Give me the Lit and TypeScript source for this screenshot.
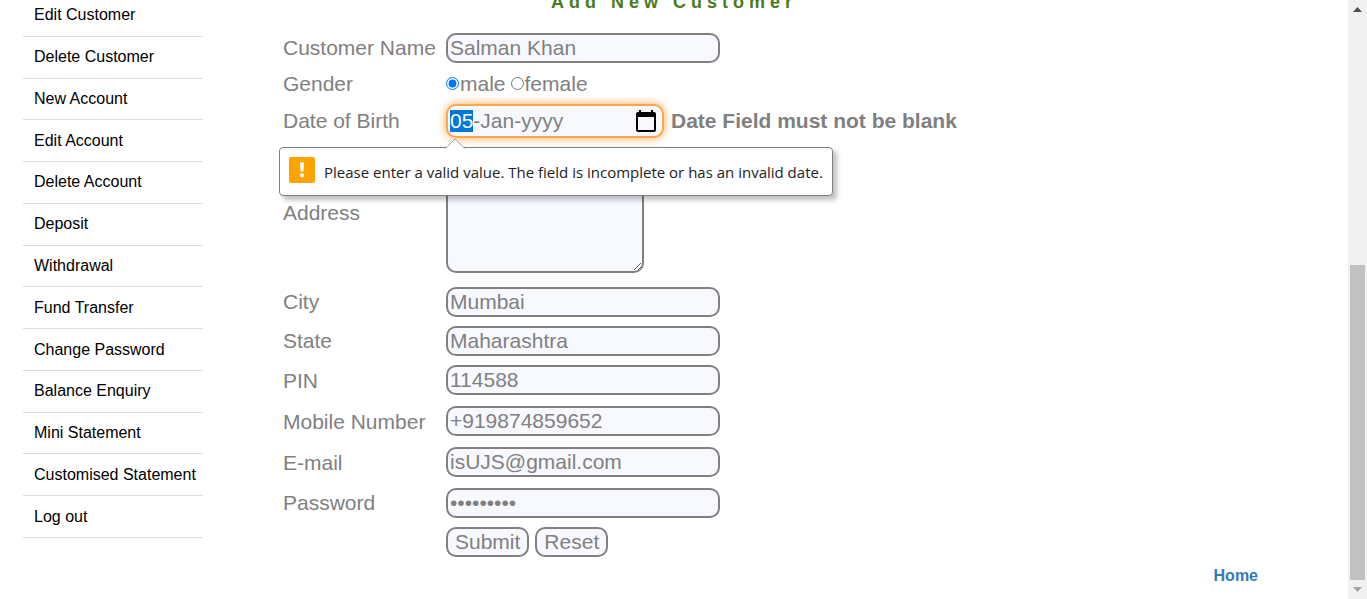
import { LitElement, html, css, svg } from "lit";
import { customElement, query } from "lit/decorators.js";
import { classMap } from "lit/directives/class-map.js";

const LINKS = [
  "Edit Customer",
  "Delete Customer",
  "New Account",
  "Edit Account",
  "Delete Account",
  "Deposit",
  "Withdrawal",
  "Fund Transfer",
  "Change Password",
  "Balance Enquiry",
  "Mini Statement",
  "Customised Statement",
  "Log out",
];

interface Field {
  id: string;
  label: string;
  value: string;
  type: string;
  tall?: boolean;
}

const CONTACT_FIELDS: Field[] = [
  { id: "city", label: "City", value: "Mumbai", type: "text" },
  { id: "state", label: "State", value: "Maharashtra", type: "text" },
  { id: "pin", label: "PIN", value: "114588", type: "text", tall: true },
  { id: "mobile", label: "Mobile Number", value: "+919874859652", type: "text", tall: true },
  { id: "email", label: "E-mail", value: "isUJS@gmail.com", type: "text", tall: true },
  { id: "password", label: "Password", value: "secret123", type: "password" },
];

const calendarIcon = svg`
  <svg class="icon" viewBox="0 0 20 22" aria-hidden="true">
    <path fill="#000" fill-rule="evenodd"
      d="M3 0h2v2h10V0h2v2h1a2 2 0 0 1 2 2v16a2 2 0 0 1-2 2H2a2 2 0 0 1-2-2V4a2 2 0 0 1 2-2h1zM2 7v13h16V7z"/>
  </svg>`;

@customElement("side-menu")
export class SideMenu extends LitElement {
  static styles = css`
    :host {
      display: block;
    }
    .list {
      display: grid;
      grid-auto-rows: 1fr;
      min-height: 543px;
      margin: 0;
      padding: 0;
      list-style: none;
    }
    .item {
      display: flex;
      align-items: center;
      border-bottom: 1px solid #ddd;
    }
    .link {
      flex: 1;
      padding-left: 11px;
      color: #000;
      font-size: 16px;
      line-height: 20px;
      text-decoration: none;
      white-space: nowrap;
    }
  `;

  render() {
    return html`<nav aria-label="Manager">
      <ul class="list">
        ${LINKS.map((t) => html`<li class="item"><a class="link" href="#">${t}</a></li>`)}
      </ul>
    </nav>`;
  }
}

@customElement("customer-form")
export class CustomerForm extends LitElement {
  static styles = css`
    :host {
      display: block;
      color: #808080;
      font-size: 21px;
      line-height: 22px;
    }
    .form {
      display: flex;
      flex-direction: column;
      gap: 9px;
      max-width: 782px;
    }
    .title {
      margin: 0 0 11px;
      color: #4b7a1e;
      font-size: 18px;
      line-height: 22px;
      letter-spacing: 5px;
      text-align: center;
    }
    .row {
      position: relative;
      display: grid;
      grid-template-columns: 163px 1fr;
      align-items: center;
    }
    .tall {
      min-height: 32px;
    }
    .tall .text {
      align-self: start;
    }
    .text,
    .area,
    .btn,
    .date {
      box-sizing: border-box;
      border: 2px solid #808080;
      border-radius: 10px;
      background: #f8f8ff;
      color: #808080;
      font: inherit;
      outline: none;
    }
    .text {
      width: 274px;
      height: 30px;
      padding: 1px 2px;
    }
    .gender {
      display: flex;
      align-items: center;
      min-height: 23px;
    }
    .radio {
      width: 13px;
      height: 13px;
      margin: 0 1px 0 0;
    }
    .choice {
      display: flex;
      align-items: center;
      margin-right: 5px;
    }
    .dob {
      display: flex;
      align-items: center;
      gap: 7px;
    }
    .date {
      display: flex;
      align-items: center;
      width: 218px;
      height: 34px;
      padding: 0 6px 0 1px;
      border-color: #ffa64d;
      box-shadow: 0 0 10px #ffa64d;
    }
    .date-input {
      flex: 1;
      min-width: 0;
      padding: 0 1px;
      border: 0;
      outline: none;
      background: none;
      color: inherit;
      font: inherit;
      caret-color: transparent;
    }
    .date-input::selection {
      background: #0078d7;
      color: #fff;
    }
    .picker {
      display: flex;
      padding: 0;
      border: 0;
      background: none;
    }
    .icon {
      width: 20px;
      height: 22px;
    }
    .error {
      font-weight: bold;
      white-space: nowrap;
    }
    .address {
      min-height: 131px;
    }
    .area {
      align-self: start;
      width: 198px;
      height: 126px;
      padding: 2px;
      resize: both;
    }
    .buttons {
      display: flex;
      gap: 6px;
      grid-column: 2;
    }
    .btn {
      height: 30px;
      padding: 0 7px;
    }
    .callout {
      position: absolute;
      z-index: 1;
      top: 43px;
      left: -4px;
      box-sizing: border-box;
      display: flex;
      align-items: center;
      gap: 9px;
      height: 49px;
      padding: 0 9px 4px;
      border: 1px solid #808080;
      border-radius: 4px;
      background: #fff;
      box-shadow: 4px 4px 5px rgba(0, 0, 0, 0.25);
      color: #222;
      font-family: "Open Sans", "Noto Sans", sans-serif;
      font-size: 15px;
      line-height: 20px;
      white-space: nowrap;
    }
    .pointer {
      position: absolute;
      top: -10px;
      left: 165px;
      width: 20px;
      height: 11px;
    }
    .warn {
      width: 26px;
      height: 26px;
    }
    .message {
      padding-top: 4px;
    }
  `;

  @query(".date-input") private dateInput!: HTMLInputElement;

  firstUpdated() {
    this.dateInput.focus({ preventScroll: true });
    this.dateInput.setSelectionRange(0, 2);
  }

  private renderField(f: Field) {
    return html`<div class=${classMap({ row: true, tall: !!f.tall })}>
      <label for=${f.id}>${f.label}</label>
      <input class="text" id=${f.id} type=${f.type} .value=${f.value} />
    </div>`;
  }

  render() {
    return html`<form class="form" novalidate @submit=${(e: Event) => e.preventDefault()}>
      <h2 class="title">Add New Customer</h2>
      ${this.renderField({ id: "name", label: "Customer Name", value: "Salman Khan", type: "text" })}
      <div class="row" role="radiogroup" aria-labelledby="gender">
        <span id="gender">Gender</span>
        <div class="gender">
          <label class="choice"><input class="radio" type="radio" name="gender" checked />male</label>
          <label class="choice"><input class="radio" type="radio" name="gender" />female</label>
        </div>
      </div>
      <div class="row">
        <label for="dob">Date of Birth</label>
        <div class="dob">
          <div class="date">
            <input class="date-input" id="dob" type="text" value="05-Jan-yyyy" spellcheck="false" />
            <button class="picker" type="button" aria-label="Show date picker">${calendarIcon}</button>
          </div>
          <span class="error">Date Field must not be blank</span>
        </div>
        <div class="callout" role="alert">
          <svg class="pointer" viewBox="0 0 20 11" aria-hidden="true">
            <path d="M0 11L1 10L10 1L19 10L20 11z" fill="#fff" />
            <path d="M.5 10.5L10 1L19.5 10.5" fill="none" stroke="#a0a0a0" />
          </svg>
          <svg class="warn" viewBox="0 0 26 26" aria-hidden="true">
            <rect width="26" height="26" rx="2" fill="#ffa300" />
            <path d="M11 5.5h4l-.5 9h-3z" fill="#fff" />
            <circle cx="13" cy="18.3" r="2.1" fill="#fff" />
          </svg>
          <span class="message">Please enter a valid value. The field is incomplete or has an invalid date.</span>
        </div>
      </div>
      <div class="row address">
        <label for="address">Address</label>
        <textarea class="area" id="address"></textarea>
      </div>
      ${CONTACT_FIELDS.map((f) => this.renderField(f))}
      <div class="row">
        <div class="buttons">
          <button class="btn" type="submit">Submit</button>
          <button class="btn" type="reset">Reset</button>
        </div>
      </div>
    </form>`;
  }
}

@customElement("scroll-track")
export class ScrollTrack extends LitElement {
  static styles = css`
    :host {
      display: grid;
      grid-template-rows: 19px 246fr 315fr 19px;
      justify-items: center;
      align-items: center;
      width: 19px;
      background: #f1f1f1;
    }
    .arrow {
      width: 9px;
      height: 5px;
    }
    .down {
      grid-row: 4;
    }
    .thumb {
      grid-row: 3;
      align-self: stretch;
      width: 15px;
      background: #c1c1c1;
    }
  `;

  render() {
    return html`
      <svg class="arrow" viewBox="0 0 9 5"><path d="M0 5L4.5 0L9 5z" fill="#505050" /></svg>
      <div class="thumb"></div>
      <svg class="arrow down" viewBox="0 0 9 5"><path d="M0 0L4.5 5L9 0z" fill="#a3a3a3" /></svg>
    `;
  }
}

@customElement("app-root")
export class AppRoot extends LitElement {
  static styles = css`
    :host {
      display: flex;
      height: 100vh;
      overflow: hidden;
      background: #fff;
      font-family: "Liberation Sans", Arial, sans-serif;
    }
    .page {
      flex: 1;
      display: flex;
      gap: 80px;
      min-width: 0;
      overflow: hidden;
      padding-left: 23px;
    }
    .menu {
      flex: none;
      width: 180px;
      margin-top: -5px;
    }
    .content {
      flex: 1;
      min-width: 0;
      margin-top: -9px;
    }
    .footer {
      display: flex;
      justify-content: flex-end;
      padding: 9px 90px 0 0;
    }
    .home {
      color: #337ab7;
      font-size: 16px;
      font-weight: bold;
      line-height: 20px;
      text-decoration: none;
    }
  `;

  render() {
    return html`
      <div class="page">
        <side-menu class="menu"></side-menu>
        <main class="content">
          <customer-form></customer-form>
          <div class="footer"><a class="home" href="#">Home</a></div>
        </main>
      </div>
      <scroll-track aria-hidden="true"></scroll-track>
    `;
  }
}
